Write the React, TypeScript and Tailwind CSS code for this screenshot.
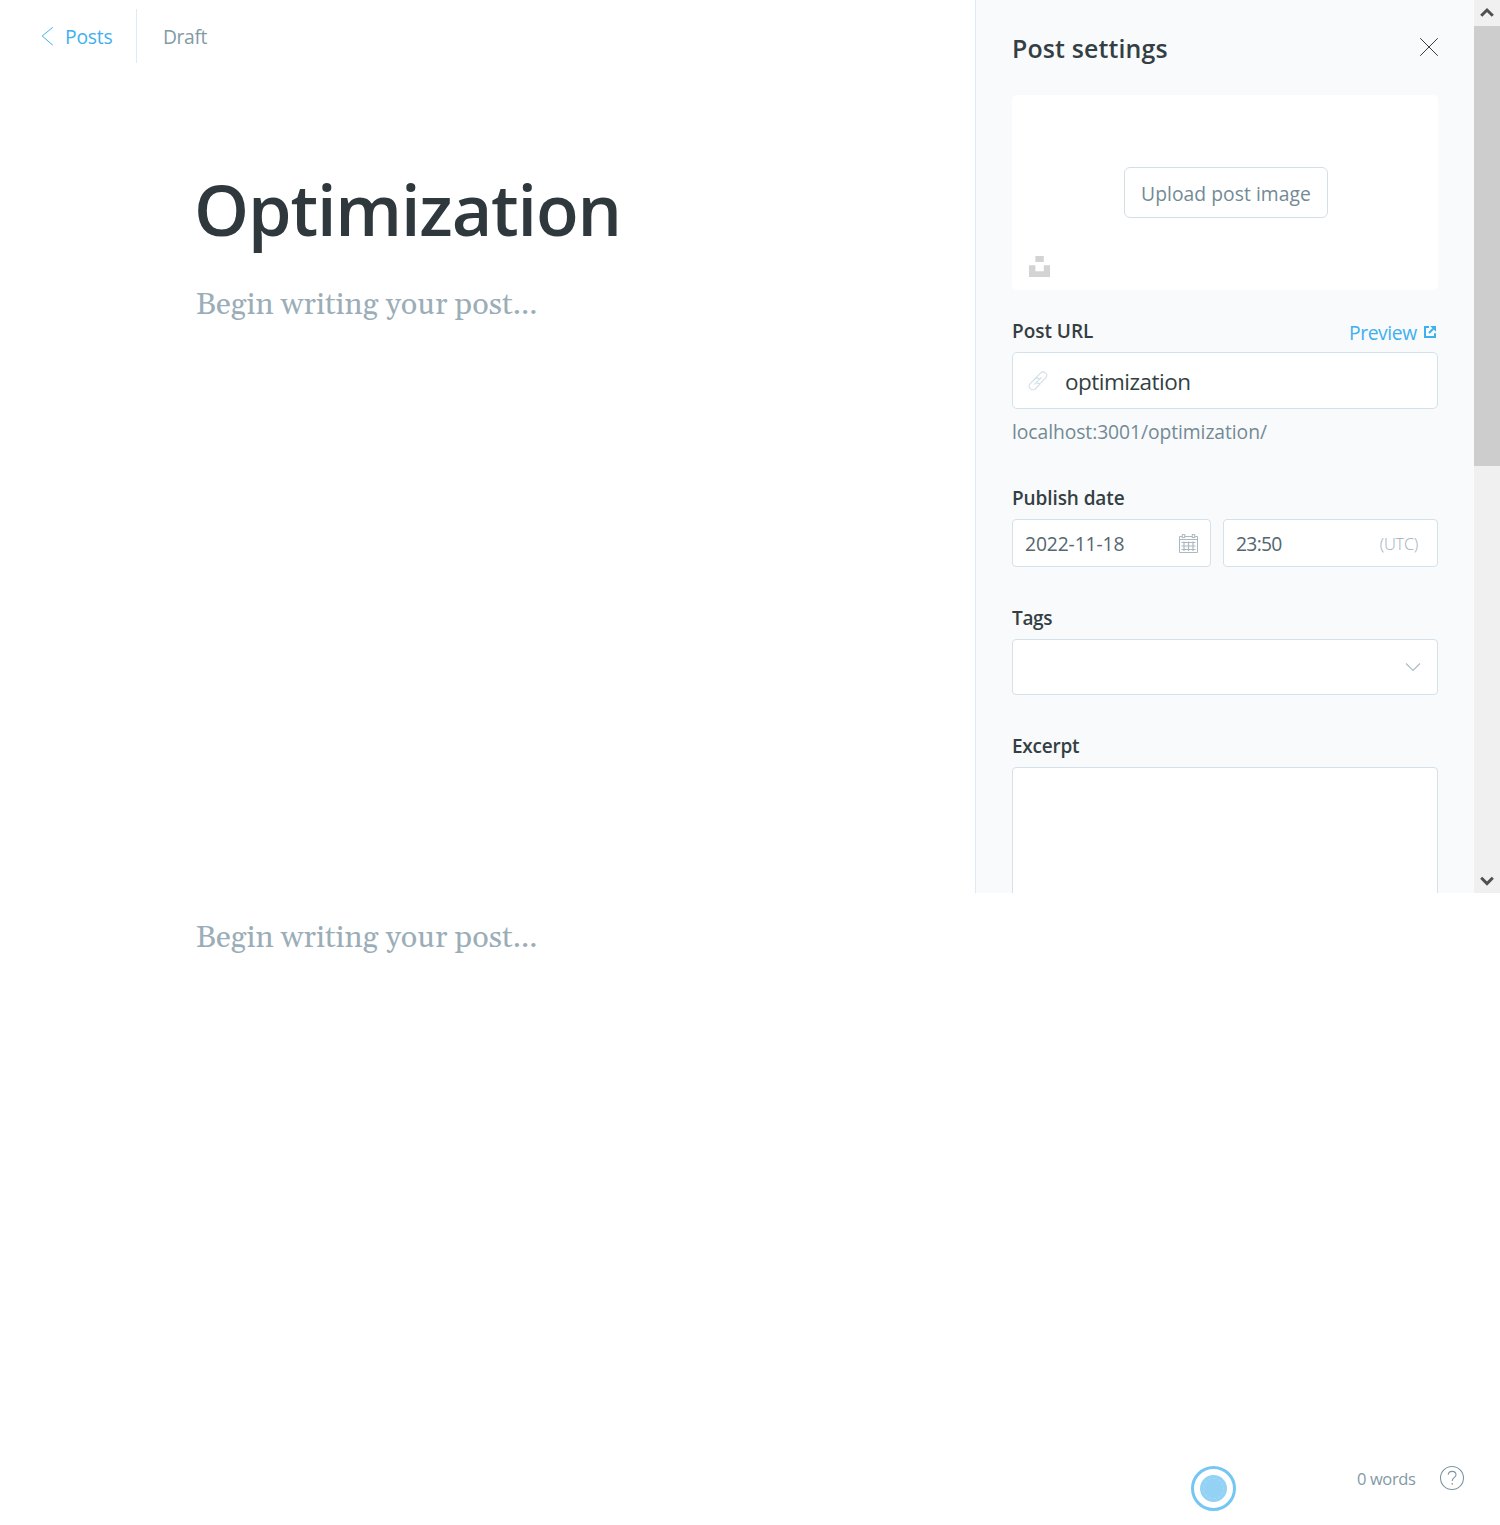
import React from 'react';

function Label({ children, className = '' }: { children: React.ReactNode; className?: string }) {
  return (
    <div className={`h-[26px] text-[19px] leading-[26px] font-semibold whitespace-nowrap text-[#343f44] ${className}`}>
      {children}
    </div>
  );
}

function Placeholder() {
  return (
    <p className="h-[40px] font-[Gelasio,'Liberation_Serif',serif] text-[30.6px] leading-[40px] tracking-[0.02px] whitespace-nowrap text-[#9baeb8]">
      Begin writing your post...
    </p>
  );
}

function Header() {
  return (
    <header className="flex h-[73px] items-center text-[19.3px] leading-[26px]">
      <a className="ml-[41px] flex items-center text-[#3eb0ef]">
        <svg className="mt-[-1px]" width="12" height="20" viewBox="0 0 12 20" fill="none" stroke="currentColor" strokeWidth="1">
          <path d="M11.8 1.3 1.2 10 11.8 19.2" />
        </svg>
        <span className="ml-[12px] w-[48px] tracking-[-0.19px] whitespace-nowrap">Posts</span>
      </a>
      <div className="mt-[-1px] ml-[23px] h-[54px] w-px bg-[#dfebf3]" />
      <span className="ml-[26px] tracking-[-0.39px] text-[#839aa5]">Draft</span>
    </header>
  );
}

function LinkIcon() {
  return (
    <svg width="22" height="22" viewBox="0 0 22 22" fill="none" stroke="#cfdfe8" strokeWidth="1.1" strokeLinecap="round" strokeLinejoin="round">
      <path d="M9 7.6 13.8 2.8a3 3 0 0 1 4.4 0l.6.6a3 3 0 0 1 0 4.4L14 12.6c-1.3 1.2-3.2 1.2-4.4.1" />
      <path d="M13 14.2 8.2 19a3 3 0 0 1-4.4 0l-.8-.8a3 3 0 0 1 0-4.4L7.8 9c1.3-1.2 3.2-1.2 4.4-.1" />
      <path d="M7.8 14.2 14.2 7.6" />
    </svg>
  );
}

function CalendarIcon() {
  return (
    <svg width="19" height="19" viewBox="0 0 19 19" fill="none" stroke="#abb9c1" strokeWidth="1">
      <path d="M3 2.5H.5v16h18v-16h-2.3M5.8 2.5h7.2M.5 5.5h18" />
      <rect x="3.3" y="0.6" width="2.4" height="3" />
      <rect x="13.3" y="0.6" width="2.4" height="3" />
      <path d="M2.5 8.5h14M2.5 12h14M2.5 15.5h14M5 7.5v9.5M9.5 7.5v9.5M14 7.5v9.5" strokeWidth="1.2" />
    </svg>
  );
}

function Settings() {
  return (
    <aside className="h-[893px] w-[499px] overflow-hidden border-l border-[#dfe9f0] bg-[#f9fafc] pr-[36px] pl-[36px]">
      <div className="flex h-[95px] items-start justify-between">
        <h2 className="mt-[31px] h-[35px] text-[24.9px] leading-[35px] font-semibold tracking-[0.15px] whitespace-nowrap text-[#343f44]">
          Post settings
        </h2>
        <svg className="mt-[37px] mr-[-1px]" width="20" height="20" viewBox="0 0 20 20" stroke="#343f44" strokeWidth="1">
          <path d="M1.2 1.2 18.8 18.8M18.8 1.2 1.2 18.8" />
        </svg>
      </div>

      <div className="relative flex h-[195px] w-[426px] items-center justify-center rounded-[5px] bg-white">
        <button className="ml-[2px] h-[51px] w-[204px] rounded-[6px] border border-[#d4dfe5] pt-[2px] text-[19.3px] leading-[47px] tracking-[0.05px] whitespace-nowrap text-[#738a94]">
          Upload post image
        </button>
        <svg className="absolute bottom-[13px] left-[17px]" width="21" height="21" viewBox="0 0 21 21" fill="#d3d3d3">
          <path d="M6.4 0h8.4v6H6.4zM0 9.2h6.4v6h8.4v-6H21V21H0z" />
        </svg>
      </div>

      <div className="flex h-[62px] w-[426px] items-start justify-between pt-[27px]">
        <Label className="mt-[1px] tracking-[-0.03px]">Post URL</Label>
        <a className="mt-[3px] flex h-[26px] items-center text-[19.3px] leading-[26px] text-[#3eb0ef]">
          <span className="w-[70px] tracking-[-0.4px] whitespace-nowrap">Preview</span>
          <svg className="mt-[-2px] ml-[5px] mr-[2px]" width="12" height="12" viewBox="0 0 12 12" fill="none" stroke="currentColor" strokeWidth="2">
            <path d="M5 1H1v10h10V7.2" />
            <path d="M5 7 9.2 2.8" />
            <path d="M6.2 0H12v5.8z" fill="currentColor" stroke="none" />
          </svg>
        </a>
      </div>
      <div className="flex h-[57px] w-[426px] items-center rounded-[5px] border border-[#d3e2ea] bg-white pl-[14px]">
        <LinkIcon />
        <span className="mt-[2px] ml-[16px] text-[22.5px] leading-[30px] tracking-[-0.5px] text-[#343f44]">optimization</span>
      </div>
      <p className="mt-[10px] h-[26px] text-[19.3px] leading-[26px] tracking-[-0.07px] text-[#738a94]">localhost:3001/optimization/</p>

      <Label className="mt-[40px] tracking-[-0.1px]">Publish date</Label>
      <div className="mt-[8px] flex w-[426px] gap-[12px] text-[19.3px] text-[#54666f]">
        <div className="flex h-[48px] w-[199px] items-center justify-between rounded-[4px] border border-[#d3e2ea] bg-white pr-[12px] pl-[12px]">
          <span className="mt-[2px] tracking-[-0.12px]">2022-11-18</span>
          <CalendarIcon />
        </div>
        <div className="flex h-[48px] w-[215px] items-center justify-between rounded-[4px] border border-[#d3e2ea] bg-white pr-[19px] pl-[12px]">
          <span className="mt-[2px] tracking-[-0.7px]">23:50</span>
          <span className="mt-[2px] text-[16.5px] font-light tracking-[-0.31px] text-[#9fb0b9]">(UTC)</span>
        </div>
      </div>

      <Label className="mt-[38px] tracking-[-0.35px]">Tags</Label>
      <div className="mt-[8px] flex h-[56px] w-[426px] items-center justify-end rounded-[4px] border border-[#d3e2ea] bg-white pr-[16px]">
        <svg width="16" height="10" viewBox="0 0 16 10" fill="none" stroke="#abbdc7" strokeWidth="1.2">
          <path d="M1 1.5 8 8.4 15 1.5" />
        </svg>
      </div>

      <Label className="mt-[38px] tracking-[-0.25px]">Excerpt</Label>
      <div className="mt-[8px] h-[170px] w-[426px] rounded-[4px] border border-[#d3e2ea] bg-white" />
    </aside>
  );
}

function Scrollbar() {
  return (
    <div className="flex h-[893px] w-[26px] flex-col items-center bg-[#f0f0f0]">
      <svg width="26" height="26" viewBox="0 0 26 26" fill="none" stroke="#505050" strokeWidth="3">
        <path d="M7.2 15.8 13 10 18.8 15.8" />
      </svg>
      <div className="h-[440px] w-full bg-[#cdcdcd]" />
      <svg className="mt-auto" width="26" height="26" viewBox="0 0 26 26" fill="none" stroke="#505050" strokeWidth="3">
        <path d="M7.2 10.8 13 16.6 18.8 10.8" />
      </svg>
    </div>
  );
}

export default function App() {
  return (
    <div className="flex h-[1525px] w-[1500px] flex-col overflow-hidden bg-white font-['Open_Sans','Noto_Sans',sans-serif]">
      <div className="flex h-[893px]">
        <main className="w-[975px]">
          <Header />
          <div className="pl-[196px]">
            <h1 className="mt-[86px] ml-[-2px] h-[100px] text-[70px] leading-[100px] font-semibold tracking-[-1.15px] whitespace-nowrap text-[#2f383d]">
              Optimization
            </h1>
            <div className="mt-[26px]">
              <Placeholder />
            </div>
          </div>
        </main>
        <Settings />
        <Scrollbar />
      </div>
      <div className="flex flex-1 flex-col justify-between">
        <div className="pt-[25px] pl-[196px]">
          <Placeholder />
        </div>
        <footer className="flex items-start justify-end pr-[35px] pb-[14px]">
          <div className="mt-[1px] flex h-[45px] w-[45px] items-center justify-center rounded-full border-[3px] border-[#74c6f4]">
            <div className="flex h-[27px] w-[27px] items-center justify-center rounded-full bg-[#93d2f5]">
              <div className="h-[21px] w-[21px] rounded-full border border-dashed border-[#a6daf7]" />
            </div>
          </div>
          <span className="mt-[2px] ml-[121px] h-[24px] w-[60px] text-[16.5px] leading-[24px] tracking-[-0.38px] whitespace-nowrap text-[#839aa5]">0 words</span>
          <svg className="ml-[22px]" width="26" height="26" viewBox="0 0 26 26" fill="none" stroke="#7f96a1" strokeWidth="1.1">
            <circle cx="13" cy="13" r="11.5" />
            <path d="M9.2 9.8c.2-2 1.8-3.4 3.9-3.4 2.2 0 3.9 1.3 3.9 3.3 0 3.1-3.8 2.9-3.8 6.2" />
            <circle cx="13.2" cy="18.9" r=".8" fill="#7f96a1" stroke="none" />
          </svg>
        </footer>
      </div>
    </div>
  );
}
